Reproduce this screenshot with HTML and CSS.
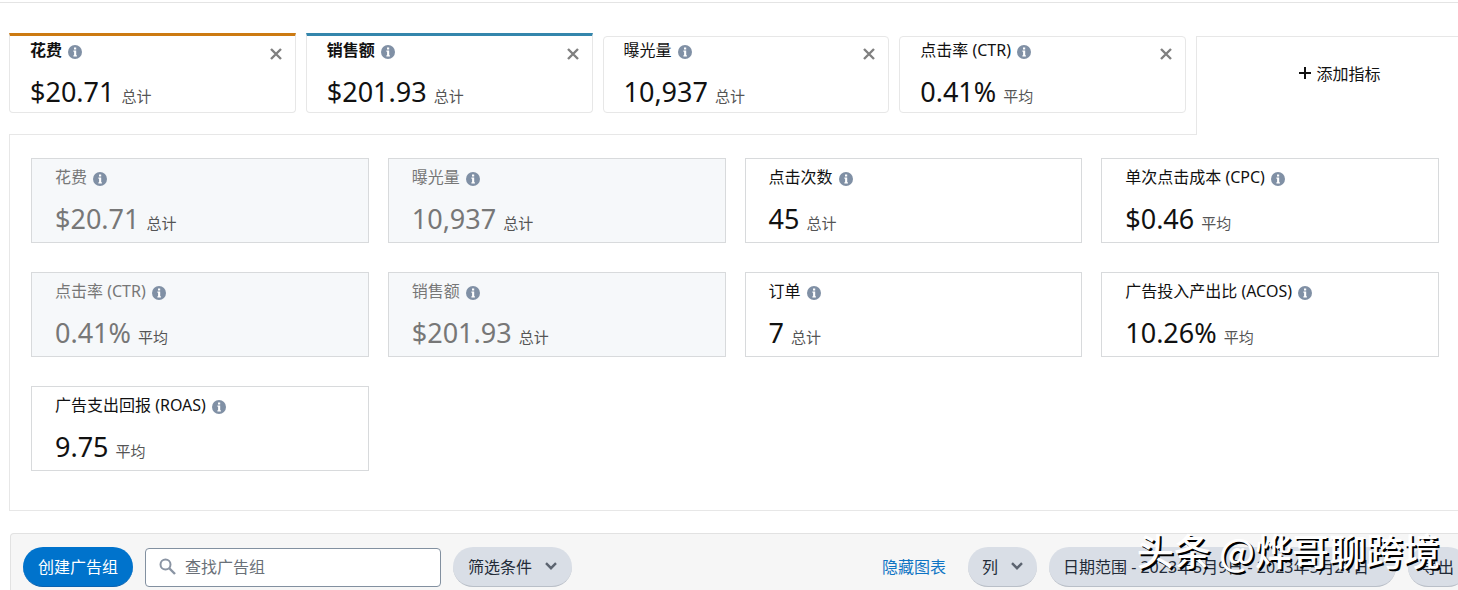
FILE: index.html
```html
<!DOCTYPE html>
<html lang="zh-CN">
<head>
    <meta charset="UTF-8">
    <title>广告组</title>
    <link rel="stylesheet" href="styles.css">
</head>
<body>
    <!-- 公用图标 -->
    <svg class="defs" width="0" height="0">
        <symbol id="info" viewBox="0 0 14 14">
            <circle cx="7" cy="7" r="7" fill="#8090a5"/>
            <path d="M6 2.4h2.2v2H6zM5.4 5.4h2.8v4.8h.7v1.3H5.4v-1.3h.7V6.7h-.7z" fill="#fff"/>
        </symbol>
        <symbol id="close" viewBox="0 0 12 12">
            <path d="M1 1l10 10M11 1L1 11" stroke="#808080" stroke-width="2.4" fill="none"/>
        </symbol>
        <symbol id="arrow" viewBox="0 0 12 8">
            <path d="M1 1.2l5 5 5-5" stroke="#5c6470" stroke-width="2.4" fill="none"/>
        </symbol>
    </svg>

    <div class="page">
        <div class="metricBar">
            <div class="metricList">
                <div class="metric orange">
                    <div class="name">花费 <svg class="info"><use href="#info"/></svg></div>
                    <div class="value">$20.71 <small>总计</small></div>
                    <button class="close" type="button" aria-label="移除花费"><svg><use href="#close"/></svg></button>
                </div>
                <div class="metric blue">
                    <div class="name">销售额 <svg class="info"><use href="#info"/></svg></div>
                    <div class="value">$201.93 <small>总计</small></div>
                    <button class="close" type="button" aria-label="移除销售额"><svg><use href="#close"/></svg></button>
                </div>
                <div class="metric">
                    <div class="name">曝光量 <svg class="info"><use href="#info"/></svg></div>
                    <div class="value">10,937 <small>总计</small></div>
                    <button class="close" type="button" aria-label="移除曝光量"><svg><use href="#close"/></svg></button>
                </div>
                <div class="metric">
                    <div class="name">点击率 (CTR) <svg class="info"><use href="#info"/></svg></div>
                    <div class="value">0.41% <small>平均</small></div>
                    <button class="close" type="button" aria-label="移除点击率"><svg><use href="#close"/></svg></button>
                </div>
            </div>
            <button class="addMetric" type="button">
                <svg width="12" height="12" viewBox="0 0 12 12"><path d="M6 0v12M0 6h12" stroke="#111" stroke-width="2"/></svg>
                添加指标
            </button>
        </div>

        <div class="panel">
            <button class="card" type="button" disabled>
                <span class="name">花费 <svg class="info"><use href="#info"/></svg></span>
                <span class="value">$20.71 <small>总计</small></span>
            </button>
            <button class="card" type="button" disabled>
                <span class="name">曝光量 <svg class="info"><use href="#info"/></svg></span>
                <span class="value">10,937 <small>总计</small></span>
            </button>
            <button class="card" type="button">
                <span class="name">点击次数 <svg class="info"><use href="#info"/></svg></span>
                <span class="value">45 <small>总计</small></span>
            </button>
            <button class="card" type="button">
                <span class="name">单次点击成本 (CPC) <svg class="info"><use href="#info"/></svg></span>
                <span class="value">$0.46 <small>平均</small></span>
            </button>
            <button class="card" type="button" disabled>
                <span class="name">点击率 (CTR) <svg class="info"><use href="#info"/></svg></span>
                <span class="value">0.41% <small>平均</small></span>
            </button>
            <button class="card" type="button" disabled>
                <span class="name">销售额 <svg class="info"><use href="#info"/></svg></span>
                <span class="value">$201.93 <small>总计</small></span>
            </button>
            <button class="card" type="button">
                <span class="name">订单 <svg class="info"><use href="#info"/></svg></span>
                <span class="value">7 <small>总计</small></span>
            </button>
            <button class="card" type="button">
                <span class="name">广告投入产出比 (ACOS) <svg class="info"><use href="#info"/></svg></span>
                <span class="value">10.26% <small>平均</small></span>
            </button>
            <button class="card" type="button">
                <span class="name">广告支出回报 (ROAS) <svg class="info"><use href="#info"/></svg></span>
                <span class="value">9.75 <small>平均</small></span>
            </button>
        </div>

        <div class="toolbar">
            <button class="btn primary" type="button">创建广告组</button>
            <label class="search">
                <svg width="17" height="17" viewBox="0 0 17 17"><circle cx="6.5" cy="6.5" r="5" fill="none" stroke="#8a94a3" stroke-width="2"/><path d="M10 10l6 6" stroke="#8a94a3" stroke-width="2.4"/></svg>
                <input type="text" placeholder="查找广告组" aria-label="查找广告组">
            </label>
            <button class="btn filter" type="button">筛选条件 <svg class="arrow"><use href="#arrow"/></svg></button>
            <a class="hideChart" href="#">隐藏图表</a>
            <button class="btn" type="button">列 <svg class="arrow"><use href="#arrow"/></svg></button>
            <button class="btn date" type="button">日期范围 - 2023年5月9日 - 2023年5月21日</button>
            <button class="btn" type="button">导出</button>
        </div>
    </div>
    <div class="watermark">头条 @烨哥聊跨境</div>
</body>
</html>
```
FILE: styles.css
```css
*{
    box-sizing: border-box;
}
body{
    margin: 0;
    overflow: hidden;
    border-top: 2px solid #fff;
    background: #fff;
    color: #111;
    font-family: "Noto Sans", "Noto Sans CJK SC", sans-serif;
    font-size: 16px;
}
button, input{
    font: inherit;
    color: inherit;
}
.defs{
    position: absolute;
}
/* 内容比窗口略宽，右侧被裁掉 */
.page{
    margin-right: -25px;
    padding-left: 9px;
    border-top: 1px solid #e4e4e4;
}
.metricBar{
    display: flex;
    padding-top: 30px;
}
.metricList{
    flex: 1;
    display: grid;
    grid-template-columns: repeat(4, 1fr);
    gap: 10px;
    padding: 0 10px 21px 0;
    border-bottom: 1px solid #e7e7e7;
}
.metric{
    position: relative;
    height: 77px;
    margin-top: 3px;
    padding: 1px 20px;
    border: 1px solid #e7e7e7;
    border-radius: 4px;
}
.orange, .blue{
    height: 80px;
    margin-top: 0;
    border-top: 3px solid #cc7a12;
    border-top-left-radius: 0;
    border-top-right-radius: 0;
}
.blue{
    border-top-color: #3486ac;
}
.orange .name, .blue .name{
    margin-top: 1px;
    font-weight: bold;
}
.orange .close, .blue .close{
    top: 12px;
}
.name{
    display: flex;
    align-items: center;
    gap: 6px;
    height: 24px;
    line-height: 24px;
    white-space: nowrap;
}
.info{
    width: 14px;
    height: 14px;
    margin-top: 3px;
}
.value{
    display: block;
    height: 36px;
    margin-top: 12px;
    font-size: 27px;
    line-height: 36px;
    white-space: nowrap;
}
small{
    color: #555;
    font-size: 15px;
}
.close{
    position: absolute;
    top: 11px;
    right: 13px;
    display: flex;
    padding: 0;
    border: 0;
    background: none;
}
.close svg{
    width: 12px;
    height: 12px;
}
.addMetric{
    width: 287px;
    margin-top: 3px;
    padding: 0 0 27px;
    display: flex;
    align-items: center;
    justify-content: center;
    gap: 5px;
    border: 1px solid #e7e7e7;
    border-width: 1px 0 0 1px;
    background: none;
}
.panel{
    display: grid;
    grid-template-columns: repeat(4, 1fr);
    gap: 29px 19px;
    padding: 23px 43px 39px 21px;
    border: 1px solid #e7e7e7;
    border-top: 0;
}
.card{
    height: 85px;
    padding: 6px 23px;
    border: 1px solid #d8dadc;
    background: #fff;
    text-align: left;
}
.card:disabled{
    background: #f6f8fa;
    color: #777;
}
.toolbar{
    display: flex;
    align-items: center;
    gap: 12px;
    margin: 22px 0 0 1px;
    padding: 13px 14px 4px 12px;
    border: 1px solid #e2e2e2;
    border-bottom: 0;
    border-radius: 4px 4px 0 0;
    background: #f6f6f6;
}
.btn{
    display: flex;
    align-items: center;
    justify-content: center;
    gap: 13px;
    height: 40px;
    padding: 0 14px 2px;
    border: 0;
    border-bottom: 1px solid #b9bfc8;
    border-radius: 20px;
    background: #d9dee6;
    color: #232b38;
    white-space: nowrap;
}
.primary{
    width: 110px;
    border-bottom-color: #0a62b0;
    background: #0073cc;
    color: #fff;
}
.filter{
    width: 119px;
}
.arrow{
    width: 12px;
    height: 8px;
}
.search{
    display: flex;
    align-items: center;
    gap: 9px;
    width: 296px;
    height: 39px;
    padding: 0 13px 1px;
    border: 1px solid #8290a0;
    border-radius: 4px;
    background: #fff;
}
.search input{
    flex: 1;
    min-width: 0;
    padding: 0;
    border: 0;
    outline: 0;
    background: none;
}
.search input::placeholder{
    color: #6a7078;
}
.hideChart{
    margin-left: auto;
    margin-right: 10px;
    padding-bottom: 2px;
    color: #0f74c4;
    text-decoration: none;
}
.date{
    width: 347px;
    justify-content: flex-start;
}
.watermark{
    position: absolute;
    right: 18px;
    bottom: 13px;
    color: #fff;
    font-family: "Noto Sans CJK SC", sans-serif;
    font-size: 37px;
    font-weight: 500;
    line-height: 54px;
    text-shadow: 2px 2px 0 #000;
    pointer-events: none;
}
```
